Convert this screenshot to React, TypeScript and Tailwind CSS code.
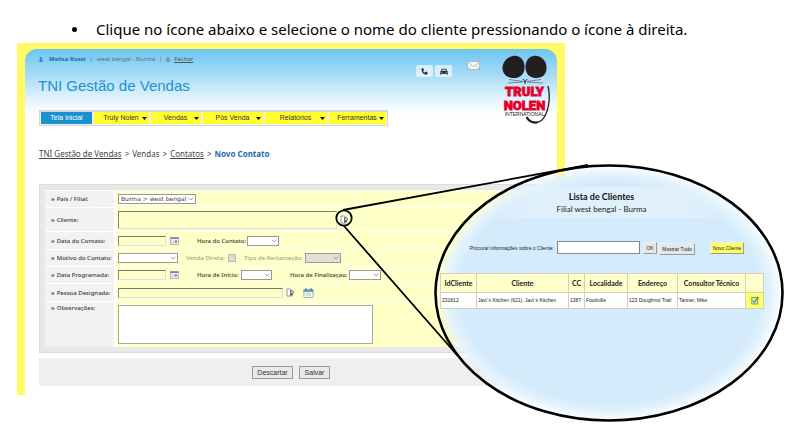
import type { ReactNode } from "react";

const sans = "font-['Liberation_Sans',Arial,sans-serif]";
const humanist = "font-['Noto_Sans',Verdana,sans-serif]";

function Logo() {
  return (
    <svg viewBox="0 0 50 72" className="h-[72px] w-[50px] shrink-0" role="img" aria-label="Truly Nolen International">
      <path d="M12 1C18 0 23 4 23.500 11C24 18 20 23 13 23C6 23 1.500 19 1.500 13C1.500 7 6 2 12 1Z" fill="#231f20" />
      <path d="M36 1C30 0 25 4 24.500 11C24 18 28 23 35 23C42 23 45.500 19 45.500 13C45.500 7 42 2 36 1Z" fill="#231f20" />
      <path d="M8 24.500L22 26.500M7 28L22 27M40 24.500L26 26.500M42 28L26 27" stroke="#444" strokeWidth=".6" />
      <path d="M22 24L24 27L26 24M24 26V29" stroke="#231f20" strokeWidth="1" fill="none" />
      <g fill="#e4002b" stroke="#e4002b" strokeWidth=".8" textAnchor="middle" fontSize="13" fontWeight="900" className="font-['Roboto','Liberation_Sans',sans-serif]">
        <text x="23.500" y="40.500">TRULY</text>
        <text x="23.500" y="54.500">NOLEN</text>
      </g>
      <text x="23.500" y="61" textAnchor="middle" fontSize="5" fill="#231f20" className={sans}>INTERNATIONAL</text>
      <path d="M47 31C50 43 47.500 58 41 65C36 69 29 68 26 62" fill="none" stroke="#231f20" strokeWidth="1.300" />
      <path d="M26 63C28 66 32 68 36 67.500" fill="none" stroke="#231f20" strokeWidth="2.200" strokeLinecap="round" />
    </svg>
  );
}

function LookupIcon() {
  return (
    <svg viewBox="0 0 9 9" className="size-[9px]" aria-hidden="true">
      <path d="M1 1H4.500L6 2.500V8H1Z" fill="#fff" stroke="#7c7c9c" strokeWidth=".8" />
      <path d="M4 2L7.500 4L6.500 7L4 8Z" fill="#55678c" />
      <circle cx="6" cy="4.200" r="1.500" fill="#bfe4f5" stroke="#455a80" strokeWidth=".7" />
    </svg>
  );
}

function GridCalendar() {
  return (
    <svg viewBox="0 0 9 8" className="h-[8px] w-[9px]" aria-hidden="true">
      <rect x=".4" y=".4" width="8.200" height="7.200" fill="#f4f4fb" stroke="#9a9ab5" strokeWidth=".7" />
      <rect x=".4" y=".4" width="8.200" height="1.600" fill="#7487b3" />
      <path d="M1 4H8M1 5.700H8M3 2.500V7.500M5 2.500V7.500" stroke="#c5c5d5" strokeWidth=".5" />
      <rect x="5" y="3.500" width="2" height="2" fill="#d9575b" />
    </svg>
  );
}

function DayCalendar() {
  return (
    <svg viewBox="0 0 11 10" className="h-[10px] w-[11px]" aria-hidden="true">
      <rect x=".9" y="1.500" width="9.200" height="8" rx=".8" fill="#f2f5f5" stroke="#829095" strokeWidth=".7" />
      <path d="M.5 1.500H10.500V4H.5Z" fill="#5fa9bd" />
      <path d="M3 0V2.500M8 0V2.500" stroke="#456" strokeWidth=".9" />
      <path d="M3.500 5.500H7.500M3.500 7.300H7.500M4 5V8M7 5V8" stroke="#b0bcc0" strokeWidth=".6" />
    </svg>
  );
}

function Field({ id, label, height, children, top = false }: { id: string; label: string; height: string; children: ReactNode; top?: boolean }) {
  return (
    <div className={`grid grid-cols-[69px_1fr] gap-[2px] ${height}`}>
      <label htmlFor={id} className={`flex gap-[2px] bg-[#f2f2f2] pl-[6px] whitespace-nowrap ${top ? "items-start pt-[2px]" : "items-center"}`}>
        <span aria-hidden="true" className="font-bold">»</span>
        {label}
      </label>
      <div className={`flex bg-[#ffffc8] pl-[2px] ${top ? "items-start pt-[3px]" : "items-center"}`}>{children}</div>
    </div>
  );
}

function Select({ id, width, value = "", disabled = false }: { id: string; width: string; value?: string; disabled?: boolean }) {
  return (
    <span className={`grid h-[10px] ${width}`}>
      <select id={id} disabled={disabled} className={`col-start-1 row-start-1 h-[10px] w-full appearance-none border border-[#999] pl-[2px] font-['DejaVu_Sans',Verdana,sans-serif] text-[6px] leading-[8px] ${disabled ? "bg-[#e0e0d8]" : "bg-white"}`}>
        <option>{value}</option>
      </select>
      <svg viewBox="0 0 6 4" className="pointer-events-none col-start-1 row-start-1 mr-[2px] h-[4px] w-[6px] self-center justify-self-end" aria-hidden="true">
        <path d="M.7 .7L3 3L5.300 .7" fill="none" stroke="#777" strokeWidth=".7" />
      </svg>
    </span>
  );
}

const inset = "border border-t-[#777] border-l-[#888] border-r-[#ddd] border-b-[#ddd] bg-[#ffffc8] text-[6px]";

const menu = [
  { label: "Truly Nolen", width: "w-[55px]" },
  { label: "Vendas", width: "w-[50px]" },
  { label: "Pós Venda", width: "w-[60px]" },
  { label: "Relatórios", width: "w-[62px]" },
  { label: "Ferramentas", width: "w-[57px]" },
];

function Application() {
  return (
    <section className="bg-[#fffb66] px-[8px] pt-[6px]">
      <div className="rounded-t-[12px] bg-white bg-[linear-gradient(#6cc5f0_0px,#a5dbf6_25px,#e2f4fd_50px,#ffffff_66px)] px-[14px] pb-[9px]">
        <header className="flex h-[61px] items-start">
          <div className="flex-1">
            <p className={`flex items-center gap-[4px] pt-[6px] text-[6px] leading-[8px] whitespace-nowrap text-[#52718a] ${humanist}`}>
              <svg viewBox="0 0 4 5" className="mr-[2px] h-[5px] w-[4px]" aria-hidden="true">
                <circle cx="2" cy="1.300" r="1.200" fill="#3186d2" />
                <path d="M0 5L1 2.500H3L4 5Z" fill="#3186d2" />
              </svg>
              <b className="text-[#1c6da8]">Melisa Rossi</b>
              <span>|</span>
              <span>west bengal - Burma</span>
              <span>|</span>
              <svg viewBox="0 0 4 5" className="h-[5px] w-[4px]" aria-hidden="true">
                <path d="M1 2V1H3V2M.5 2.500H3.500V4.500H.5Z" fill="none" stroke="#777" strokeWidth=".8" />
              </svg>
              <a href="#sair" className="text-[#555] underline">Fechar</a>
            </p>
            <h1 className={`-ml-px mt-[14px] text-[15px] leading-[18px] text-[#1b91cf] ${sans}`}>TNI Gestão de Vendas</h1>
          </div>
          <div className="flex items-start gap-[2px] pt-[16px]">
            <button aria-label="Telefone" className="flex h-[12px] w-[17px] items-center justify-center rounded-[2px] bg-white/60">
              <svg viewBox="0 0 7 7" className="size-[7px]" aria-hidden="true">
                <path d="M1.200 1C1.200 4 3 6 6 6" fill="none" stroke="#222" strokeWidth="1.300" />
                <path d="M.8 .5L2.400 1.500L1.500 3M4 5L5.500 4.300L6.500 5.500" stroke="#222" strokeWidth="1.100" fill="none" />
              </svg>
            </button>
            <button aria-label="Veículo" className="flex h-[12px] w-[17px] items-center justify-center rounded-[2px] bg-white/60">
              <svg viewBox="0 0 8 7" className="h-[7px] w-[8px]" aria-hidden="true">
                <path d="M1.700 .8H6.300L7.200 3L7.700 3.500V6.500H6.500V5.700H1.500V6.500H.3V3.500L.8 3Z" fill="#222" />
                <path d="M2 1.600H6L6.400 2.900H1.600Z" fill="#9db" />
                <path d="M1 4.300H2.400M5.600 4.300H7" stroke="#fff" strokeWidth=".6" />
              </svg>
            </button>
          </div>
          <svg viewBox="0 0 13 9" className="mt-[12px] mr-[21px] ml-[15px] h-[9px] w-[13px]" aria-hidden="true">
            <rect x=".4" y=".4" width="12.200" height="8.200" fill="#f6f8f4" stroke="#9fb3b5" strokeWidth=".8" />
            <path d="M.5 .8L6.500 5.500L12.500 .8M.8 8.200L4.500 4.300M12.200 8.200L8.500 4.300" fill="none" stroke="#a3b0ae" strokeWidth=".7" />
          </svg>
          <div className="-mr-[8px] pt-[6px]"><Logo /></div>
        </header>

        <nav className={`flex w-fit gap-[2px] border border-t-2 border-[#d5d5d5] bg-[#f0f0f0] px-px pb-px text-[7px] leading-[12px] ${sans}`}>
          <a href="#inicio" className="w-[51px] bg-[#1b91cf] text-center text-white">Tela inicial</a>
          {menu.map((item) => (
            <button key={item.label} className={`flex items-center bg-[#ffff2e] pr-[2px] pl-[6px] text-[#333] ${item.width}`}>
              <span className="flex-1 text-center">{item.label}</span>
              <svg viewBox="0 0 5 3" className="h-[3px] w-[5px]" aria-hidden="true"><path d="M0 0H5L2.500 3Z" fill="#111" /></svg>
            </button>
          ))}
        </nav>

        <p className={`mt-[23px] flex gap-[3px] text-[8px] leading-[10px] text-[#444] ${humanist}`}>
          <a href="#gestao" className="underline">TNI Gestão de Vendas</a>
          <span>&gt;</span>
          <span>Vendas</span>
          <span>&gt;</span>
          <a href="#contatos" className="underline">Contatos</a>
          <span>&gt;</span>
          <b className="text-[#1b6fb0]">Novo Contato</b>
        </p>

        <form>
          <div className={`mt-[25px] border border-[#dcdcdc] bg-[#e8e8e8] p-[5px] text-[6px] leading-[8px] font-medium text-[#3a3a3a] ${humanist}`}>
            <div className="flex flex-col gap-px bg-white pt-px">
              <Field id="filial" label="País / Filial:" height="h-[16px]">
                <Select id="filial" width="w-[78px]" value="Burma > west bengal" />
              </Field>
              <Field id="cliente" label="Cliente:" height="h-[23px]">
                <input id="cliente" className={`h-[18px] w-[219px] ${inset}`} />
                <button type="button" aria-label="Procurar cliente" className="ml-[3px]"><LookupIcon /></button>
              </Field>
              <Field id="data" label="Data do Contato:" height="h-[17px]">
                <input id="data" className={`h-[10px] w-[48px] ${inset}`} />
                <button type="button" aria-label="Calendário" className="ml-[4px]"><GridCalendar /></button>
                <label htmlFor="hora" className="ml-[18px] w-[50px] whitespace-nowrap">Hora do Contato:</label>
                <Select id="hora" width="w-[32px]" />
              </Field>
              <Field id="motivo" label="Motivo do Contato:" height="h-[16px]">
                <Select id="motivo" width="w-[60px]" />
                <label htmlFor="venda" className="ml-[8px] w-[42px] whitespace-nowrap text-[#a5a58c]">Venda Direta:</label>
                <input id="venda" type="checkbox" disabled className="size-[8px] appearance-none border border-[#bbb] bg-[#dedec8]" />
                <label htmlFor="tipo" className="ml-[8px] w-[61px] whitespace-nowrap text-[#a5a58c]">Tipo de Reclamação:</label>
                <Select id="tipo" width="w-[36px]" disabled />
              </Field>
              <Field id="programada" label="Data Programada:" height="h-[16px]">
                <input id="programada" className={`h-[10px] w-[48px] ${inset}`} />
                <button type="button" aria-label="Calendário" className="ml-[4px]"><GridCalendar /></button>
                <label htmlFor="inicio" className="ml-[18px] w-[44px] whitespace-nowrap">Hora de Início:</label>
                <Select id="inicio" width="w-[31px]" />
                <label htmlFor="fim" className="ml-[18px] w-[59px] whitespace-nowrap">Hora de Finalizaçao:</label>
                <Select id="fim" width="w-[32px]" />
              </Field>
              <Field id="pessoa" label="Pessoa Designada:" height="h-[17px]">
                <input id="pessoa" className={`h-[10px] w-[165px] ${inset}`} />
                <button type="button" aria-label="Procurar pessoa" className="ml-[3px]"><LookupIcon /></button>
                <button type="button" aria-label="Agenda" className="ml-[8px]"><DayCalendar /></button>
              </Field>
              <Field id="obs" label="Observações:" height="h-[45px]" top>
                <textarea id="obs" className="h-[39px] w-[255px] resize-none border border-[#aaa] bg-white text-[6px]" />
              </Field>
            </div>
          </div>
          <div className={`mt-[5px] flex h-[28px] items-center justify-center gap-[6px] bg-[#efefef] text-[7px] leading-[9px] text-[#333] ${sans}`}>
            <button type="reset" className="w-[41px] border border-[#999] bg-[#e9e9e9] py-px">Descartar</button>
            <button type="button" className="w-[31px] border border-[#999] bg-[#e9e9e9] py-px">Salvar</button>
          </div>
        </form>
      </div>
    </section>
  );
}

function ClientList() {
  const cell = "border border-[#d0d0bb]";
  const raised = "border border-[#eee] border-r-[#999] border-b-[#999] whitespace-nowrap";
  return (
    <section className="absolute top-[122px] left-[418px] h-[256px] w-[349px] overflow-hidden rounded-[50%] bg-[radial-gradient(closest-side,#d4ebfb_86%,#e4f3fc_93%,#ffffff00_100%)] font-['Lato','Liberation_Sans',sans-serif] text-[#222]">
      <div className="mt-[22px] h-[31px] bg-[linear-gradient(90deg,transparent_12%,#e4f3fcbb_30%,#e4f3fcbb_70%,transparent_88%)] pt-[4px] pr-[16px] text-center">
        <h2 className="text-[9px] leading-[12px] font-bold text-[#111]">Lista de Clientes</h2>
        <p className="text-[8px] leading-[12px]">Filial west bengal - Burma</p>
      </div>
      <div className={`mt-[23px] ml-[22px] flex h-[13px] items-center text-[5px] leading-[10px] ${sans}`}>
        <label htmlFor="busca" className="mr-[3px] w-[97px] text-right whitespace-nowrap">Procurar informações sobre o Cliente:</label>
        <input id="busca" className="h-[13px] w-[83px] border border-[#888] bg-white" />
        <button className={`ml-[3px] w-[14px] bg-[#e4e8ec] ${raised}`}>OK</button>
        <button className={`mt-[2px] ml-[2px] w-[36px] bg-[#e4e8ec] ${raised}`}>Mostrar Tudo</button>
        <button className={`ml-[15px] w-[34px] bg-[#ffff66] ${raised}`}>Novo Cliente</button>
      </div>
      <table className="mt-[19px] ml-[5px] w-[323px] table-fixed border-collapse text-[5px]">
        <colgroup>
          <col className="w-[36px]" /><col className="w-[92px]" /><col className="w-[16px]" /><col className="w-[43px]" /><col className="w-[50px]" /><col className="w-[68px]" /><col className="w-[18px]" />
        </colgroup>
        <thead>
          <tr className="h-[19px] bg-[#ffffcc] text-[7px]">
            {["IdCliente", "Cliente", "CC", "Localidade", "Endereço", "Consultor Técnico", ""].map((h, i) => (
              <th key={i} className={`p-0 whitespace-nowrap ${cell}`}>{h}</th>
            ))}
          </tr>
        </thead>
        <tbody className={sans}>
          <tr className="h-[16px] bg-white">
            {["231812", "Javi´s Kitchen (621). Javi´s Kitchen", "1387", "Foodville", "123 Doughnut Trail", "Tanner, Mike"].map((v) => (
              <td key={v} className={`p-0 pl-px whitespace-nowrap ${cell}`}>{v}</td>
            ))}
            <td className={`bg-[#ffff66] p-0 ${cell}`}>
              <button aria-label="Selecionar cliente" className="mx-auto block">
                <svg viewBox="0 0 8 9" className="h-[9px] w-[8px]" aria-hidden="true">
                  <rect x=".8" y="1.500" width="6" height="6.500" fill="#d9ebc8" stroke="#6d8a55" strokeWidth=".8" />
                  <path d="M2 4.500L3.500 6.500L7.200 .8" fill="none" stroke="#32a050" strokeWidth="1.200" />
                </svg>
              </button>
            </td>
          </tr>
        </tbody>
      </table>
    </section>
  );
}

export default function App() {
  return (
    <main className="min-h-screen overflow-hidden bg-white">
      <ul className="list-none pt-[18px] pl-[72px] font-['Noto_Sans','Segoe_UI',sans-serif] text-[15px] leading-[22px] text-black">
        <li className="flex items-center gap-[19px] whitespace-nowrap">
          <span aria-hidden="true" className="size-[5px] rounded-full bg-black" />
          Clique no ícone abaixo e selecione o nome do cliente pressionando o ícone à direita.
        </li>
      </ul>
      <div className="relative mt-[3px] mr-[225px] ml-[17px]">
        <Application />
        <ClientList />
        <svg viewBox="0 0 773 382" className="pointer-events-none absolute top-0 left-0 h-[382px] w-[773px] max-w-none" aria-hidden="true">
          <g fill="none" stroke="#000">
            <ellipse cx="592" cy="250" rx="173.500" ry="127.500" strokeWidth="2.600" />
            <circle cx="327" cy="175" r="7.700" strokeWidth="1.800" />
            <path d="M326 167L571 122M327 183L440 312" strokeWidth="1.800" />
          </g>
        </svg>
      </div>
    </main>
  );
}
